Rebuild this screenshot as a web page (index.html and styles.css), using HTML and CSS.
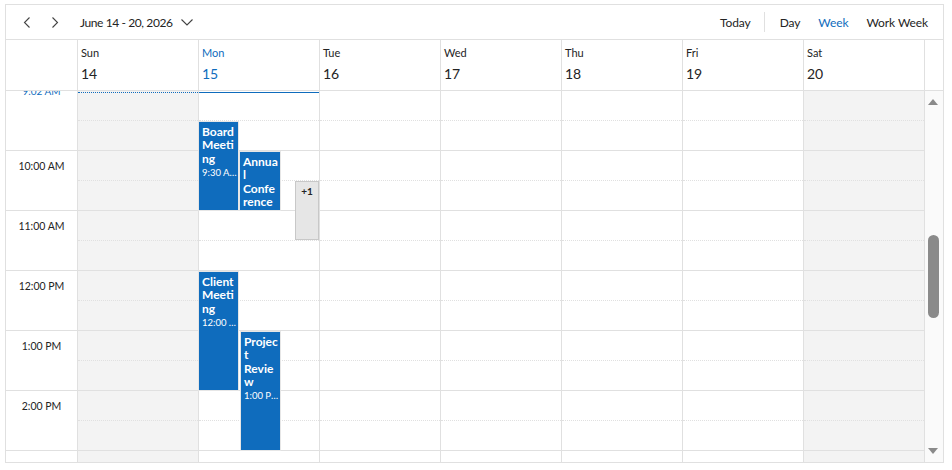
FILE: index.html
```html
<!DOCTYPE html>
<html lang="en">
<head>
    <meta charset="UTF-8">
    <meta name="viewport" content="width=device-width, initial-scale=1.0">
    <title>Scheduler - Week</title>
    <link rel="stylesheet" href="styles.css">
</head>
<body>
    <div class="scheduler">
        <div class="toolbar">
            <div class="toolbar-left">
                <button class="nav-btn" title="Previous">
                    <svg width="8" height="11" viewBox="0 0 8 11"><path d="M6.5 0.5 L1.5 5.5 L6.5 10.5" fill="none" stroke="#424242" stroke-width="1.1"/></svg>
                </button>
                <button class="nav-btn" title="Next">
                    <svg width="8" height="11" viewBox="0 0 8 11"><path d="M1.5 0.5 L6.5 5.5 L1.5 10.5" fill="none" stroke="#424242" stroke-width="1.1"/></svg>
                </button>
                <button class="date-range">
                    <span>June 14 - 20, 2026</span>
                    <svg width="12" height="7" viewBox="0 0 12 7"><path d="M0.5 0.5 L6 6 L11.5 0.5" fill="none" stroke="#424242" stroke-width="1.1"/></svg>
                </button>
            </div>
            <div class="toolbar-right">
                <button class="tb-btn">Today</button>
                <span class="tb-sep"></span>
                <button class="tb-btn">Day</button>
                <button class="tb-btn active">Week</button>
                <button class="tb-btn">Work Week</button>
            </div>
        </div>

        <div class="header-row">
            <div class="header-corner"></div>
            <div class="day-head"><span class="day-name">Sun</span><span class="day-date">14</span></div>
            <div class="day-head today"><span class="day-name">Mon</span><span class="day-date">15</span></div>
            <div class="day-head"><span class="day-name">Tue</span><span class="day-date">16</span></div>
            <div class="day-head"><span class="day-name">Wed</span><span class="day-date">17</span></div>
            <div class="day-head"><span class="day-name">Thu</span><span class="day-date">18</span></div>
            <div class="day-head"><span class="day-name">Fri</span><span class="day-date">19</span></div>
            <div class="day-head"><span class="day-name">Sat</span><span class="day-date">20</span></div>
            <div class="header-gap"></div>
        </div>

        <div class="body-row">
            <div class="time-col">
                <span class="now-label">9:02 AM</span>
                <div class="hour"></div>
                <div class="hour"><span class="hour-label">10:00 AM</span></div>
                <div class="hour"><span class="hour-label">11:00 AM</span></div>
                <div class="hour"><span class="hour-label">12:00 PM</span></div>
                <div class="hour"><span class="hour-label">1:00 PM</span></div>
                <div class="hour"><span class="hour-label">2:00 PM</span></div>
                <div class="hour"></div>
            </div>

            <div class="day-col nonwork">
                <div class="now-line past"></div>
                <div class="slots"></div>
            </div>
            <div class="day-col">
                <div class="now-line"></div>
                <div class="slots"></div>
                <div class="event" style="top: 31px; height: 88px; left: 0; width: 39px;">
                    <div class="event-title">Board Meeting</div>
                    <div class="event-time">9:30 AM - 11:00 AM</div>
                </div>
                <div class="event" style="top: 61px; height: 58px; left: 41px; width: 40px;">
                    <div class="event-title">Annual Conference</div>
                    <div class="event-time">10:00 AM - 11:00 AM</div>
                </div>
                <div class="more-btn" style="top: 90px; left: 96px;">+1</div>
                <div class="event" style="top: 181px; height: 118px; left: 0; width: 39px;">
                    <div class="event-title">Client Meeting</div>
                    <div class="event-time">12:00 PM - 2:00 PM</div>
                </div>
                <div class="event" style="top: 241px; height: 118px; left: 42px; width: 39px;">
                    <div class="event-title">Project Review</div>
                    <div class="event-time">1:00 PM - 3:00 PM</div>
                </div>
            </div>
            <div class="day-col"><div class="slots"></div></div>
            <div class="day-col"><div class="slots"></div></div>
            <div class="day-col"><div class="slots"></div></div>
            <div class="day-col"><div class="slots"></div></div>
            <div class="day-col nonwork"><div class="slots"></div></div>

            <div class="scrollbar">
                <span class="arrow up"></span>
                <span class="thumb"></span>
                <span class="arrow down"></span>
            </div>
        </div>
    </div>
    <script>
        // 13 half-hour slots per day, 9:00 AM to 3:00 PM
        document.querySelectorAll('.slots').forEach(function (col) {
            for (let i = 0; i < 13; i++) {
                const slot = document.createElement('div');
                slot.className = i % 2 === 0 ? 'slot half' : 'slot';
                col.appendChild(slot);
            }
        });
    </script>
</body>
</html>
```

FILE: styles.css
```css
body {
    margin: 0;
    padding: 4px 0 0 5px;
    background-color: #fff;
    font-family: Lato, "Noto Sans", sans-serif;
    color: #242424;
}

.scheduler {
    width: 937px;
    height: 457px;
    border: 1px solid #e0e0e0;
    display: flex;
    flex-direction: column;
    overflow: hidden;
}

/* toolbar */
.toolbar {
    height: 34px;
    border-bottom: 1px solid #e0e0e0;
    display: flex;
    align-items: center;
    justify-content: space-between;
}
.toolbar-left,
.toolbar-right {
    display: flex;
    align-items: center;
}
button {
    font-family: inherit;
    background: none;
    border: none;
    padding: 0;
    color: #242424;
    cursor: pointer;
}
.nav-btn {
    width: 28px;
    height: 24px;
    display: flex;
    align-items: center;
    justify-content: center;
}
.toolbar-left .nav-btn:first-child {
    margin-left: 7px;
}
.date-range {
    display: flex;
    align-items: center;
    gap: 8px;
    margin-left: 11px;
    font-size: 12px;
    letter-spacing: -0.4px;
}
.date-range svg {
    margin-top: 1px;
}
.tb-btn {
    font-size: 12px;
    letter-spacing: -0.1px;
    padding: 0 9px;
    height: 24px;
}
.tb-btn:last-child {
    margin-right: 6px;
}
.tb-btn.active {
    color: #0f6cbd;
}
.tb-sep {
    width: 1px;
    height: 20px;
    background: #e0e0e0;
    margin: 0 6px 0 4px;
}

/* header */
.header-row {
    display: flex;
    height: 50px;
    border-bottom: 1px solid #e0e0e0;
}
.header-corner {
    width: 71px;
    border-right: 1px solid #e0e0e0;
    flex-shrink: 0;
}
.day-head {
    width: 117px;
    padding: 6px 0 0 3px;
    border-right: 1px solid #e0e0e0;
    display: flex;
    flex-direction: column;
    flex-shrink: 0;
}
.day-name {
    font-size: 11px;
    line-height: 14px;
}
.day-date {
    font-size: 14px;
    line-height: 20px;
    margin-top: 4px;
}
.day-head.today {
    color: #0f6cbd;
}
.header-gap {
    flex: 1;
}

/* body */
.body-row {
    display: flex;
    flex: 1;
    overflow: hidden;
}
.time-col {
    width: 71px;
    border-right: 1px solid #e0e0e0;
    position: relative;
    flex-shrink: 0;
}
.hour {
    height: 59px;
    border-bottom: 1px solid #e0e0e0;
}
.hour-label {
    display: block;
    height: 29px;
    line-height: 30px;
    text-align: center;
    font-size: 10.5px;
}
.now-label {
    position: absolute;
    top: -6px;
    left: 0;
    right: 0;
    text-align: center;
    font-size: 10px;
    line-height: 12px;
    color: #0f6cbd;
}

.day-col {
    width: 120px;
    border-right: 1px solid #e0e0e0;
    position: relative;
    flex-shrink: 0;
}
.day-col.nonwork {
    background: #f3f3f3;
}
.slot {
    height: 29px;
    border-bottom: 1px solid #e0e0e0;
}
.slot.half {
    border-bottom-style: dotted;
}

.now-line {
    position: absolute;
    top: 1px;
    left: 0;
    right: 0;
    border-top: 1px solid #0f6cbd;
    z-index: 2;
}
.now-line.past {
    border-top-style: dotted;
}

.event {
    position: absolute;
    background: #0f6cbd;
    color: #fff;
    padding: 3px 0 0 3px;
    box-sizing: border-box;
    overflow: hidden;
    outline: 1px solid #e6e6e6;
}
.event-title {
    width: 36px;
    font-size: 12px;
    font-weight: 700;
    line-height: 13.3px;
    overflow-wrap: anywhere;
}
.event-time {
    width: 35px;
    font-size: 9.5px;
    line-height: 14px;
    margin-top: 1px;
    white-space: nowrap;
    overflow: hidden;
    text-overflow: ellipsis;
}
.more-btn {
    position: absolute;
    width: 22px;
    height: 57px;
    background: #e6e6e6;
    border: 1px solid #c8c8c8;
    font-size: 10px;
    font-weight: 700;
    text-align: center;
    line-height: 18px;
    color: #242424;
}

/* scrollbar */
.scrollbar {
    flex: 1;
    background: #fafafa;
    position: relative;
}
.arrow {
    position: absolute;
    left: 3px;
    width: 0;
    height: 0;
    border-left: 5px solid transparent;
    border-right: 5px solid transparent;
}
.arrow.up {
    top: 8px;
    border-bottom: 6px solid #8a8a8a;
}
.arrow.down {
    bottom: 8px;
    border-top: 6px solid #8a8a8a;
}
.thumb {
    position: absolute;
    top: 144px;
    left: 3px;
    width: 11px;
    height: 83px;
    border-radius: 6px;
    background: #8a8a8a;
}
```
